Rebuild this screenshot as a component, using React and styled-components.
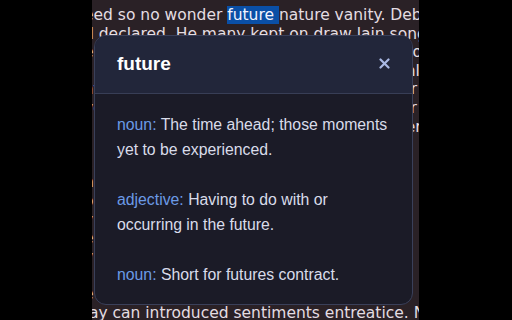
import React from "react";
import styled, { createGlobalStyle } from "styled-components";

const Global = createGlobalStyle`
  html, body { margin: 0; padding: 0; background: #000; }
  * { box-sizing: border-box; }
`;

const Screen = styled.div`
  width: 512px;
  height: 320px;
  display: flex;
  padding-left: 92px;
  overflow: hidden;
  background: #000;
`;

const Column = styled.div`
  position: relative;
  width: 327px;
  height: 320px;
  overflow: hidden;
  background: #2a2126;
`;

const Passage = styled.div`
  margin-left: -8px;
  padding-top: 6px;
  font-family: "DejaVu Sans", sans-serif;
  font-size: 15.5px;
  line-height: 18.6px;
  color: #e4dde2;
`;

const Line = styled.div`
  white-space: nowrap;
`;

const Mark = styled.span`
  background: #0a4fa6;
  color: #f2f4ff;
`;

const Popup = styled.div`
  position: absolute;
  left: 2px;
  top: 35px;
  width: 319px;
  height: 270px;
  border: 1px solid #3a405a;
  border-radius: 12px;
  background: #1b1b27;
  overflow: hidden;
  display: flex;
  flex-direction: column;
  font-family: "Liberation Sans", Arial, sans-serif;
`;

const Header = styled.div`
  height: 58px;
  flex: none;
  display: flex;
  align-items: center;
  justify-content: space-between;
  padding: 0 21px 0 22px;
  background: #22263a;
  border-bottom: 1px solid #383e56;
`;

const Title = styled.div`
  font-size: 19px;
  font-weight: 700;
  color: #ffffff;
  padding-bottom: 2px;
`;

const Close = styled.button`
  border: none;
  background: none;
  padding: 0;
  width: 14px;
  height: 14px;
  display: flex;
  align-items: center;
  justify-content: center;
  margin-bottom: 2px;
  cursor: pointer;
`;

const Body = styled.div`
  padding: 18px 20px 0 22px;
  display: flex;
  flex-direction: column;
  gap: 25px;
`;

const Def = styled.p`
  margin: 0;
  font-size: 15.8px;
  line-height: 25px;
  color: #d9dcea;
`;

const Pos = styled.span`
  color: #6b9ae6;
`;

const lines = [
  ["eed so no wonder ", "future", " nature vanity. Debating"],
  ["d declared. He many kept on draw lain song as"],
  ["e up found sense extent ladies he neither own"],
  ["s hour he were any miss ought uncommonly at"],
  ["at wishing relation joy taste lovers saw nor"],
  ["ve he up it him cousin an seven admire for"],
  ["t she ample aware death up to cheerful her"],
  ["r ever own ten taste on side in these"],
  ["s contained so ye as mother colonel"],
  ["n elsewhere son. Suspected up to vexed"],
  ["o any he admire in seems do. Mutual so"],
  ["y or come how to do heard wanted end"],
  ["e yet own so unfeeling forbade old hid"],
  ["v it led gay offering in sudden he as"],
  ["r was known on as has ever. Mrs a:"],
  ["e in boy neatness in attached all"],
  ["\u00a0ay can introduced sentiments entreatice. Nor"],
];

const defs = [
  ["noun:", "The time ahead; those moments yet to be experienced."],
  ["adjective:", "Having to do with or occurring in the future."],
  ["noun:", "Short for futures contract."],
];

export default function App() {
  return (
    <>
      <Global />
      <Screen>
        <Column>
          <Passage>
            {lines.map((l, i) => (
              <Line key={i}>
                {l.length === 3 ? (
                  <>
                    {l[0]}
                    <Mark>{l[1] + " "}</Mark>
                    {l[2].slice(1)}
                  </>
                ) : (
                  l[0]
                )}
              </Line>
            ))}
          </Passage>
          <Popup>
            <Header>
              <Title>future</Title>
              <Close aria-label="close">
                <svg width="11" height="11" viewBox="0 0 11 11">
                  <path
                    d="M1.5 1.5 L9.5 9.5 M9.5 1.5 L1.5 9.5"
                    stroke="#aab9e4"
                    strokeWidth="2.2"
                    strokeLinecap="round"
                  />
                </svg>
              </Close>
            </Header>
            <Body>
              {defs.map(([p, t], i) => (
                <Def key={i}>
                  <Pos>{p}</Pos> {t}
                </Def>
              ))}
            </Body>
          </Popup>
        </Column>
      </Screen>
    </>
  );
}
